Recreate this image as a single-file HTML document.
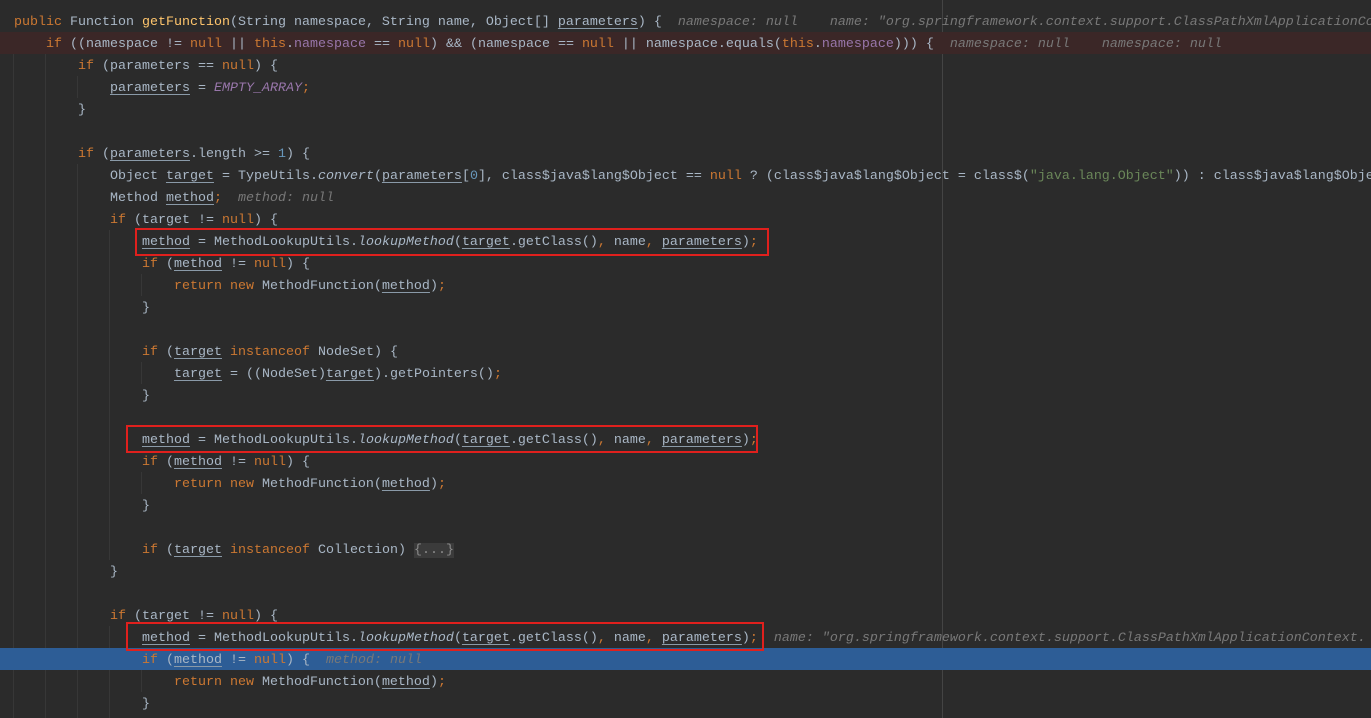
<!DOCTYPE html>
<html><head><meta charset="utf-8"><style>
body{margin:0;width:1371px;height:718px;background:#2b2b2b;overflow:hidden;position:relative}
pre{margin:0;position:absolute;left:14px;top:12px;font-family:"Liberation Mono",monospace;font-size:13.33px;line-height:22px;color:#a9b7c6;white-space:pre;z-index:2}
.k{color:#cc7832}.f{color:#ffc66d}.v{color:#9876aa}.i{font-style:italic}.s{color:#6a8759}
.u{text-decoration:underline;text-decoration-color:#8a9aa8;text-underline-offset:3px}
.h{color:#787878;font-style:italic}
.fold{background:#3b3b3b;color:#8c8c8c}
.band{position:absolute;left:0;width:1371px;height:22px}
.g{position:absolute;width:1px;background:#373737}
.box{position:absolute;border:2px solid #e0201d;z-index:3}
</style></head><body>
<div class="g" style="left:942px;top:0;height:718px;background:#444"></div>
<div class="g" style="left:13px;top:32px;height:686px"></div>
<div class="g" style="left:45px;top:54px;height:664px"></div>
<div class="g" style="left:77px;top:76px;height:22px"></div>
<div class="g" style="left:77px;top:164px;height:554px"></div>
<div class="g" style="left:109px;top:230px;height:330px"></div>
<div class="g" style="left:109px;top:626px;height:92px"></div>
<div class="g" style="left:141px;top:274px;height:22px"></div>
<div class="g" style="left:141px;top:362px;height:22px"></div>
<div class="g" style="left:141px;top:472px;height:22px"></div>
<div class="g" style="left:141px;top:670px;height:22px"></div>
<div class="band" style="top:32px;background:#3b2727"></div>
<div class="band" style="top:648px;background:#2d5d96"></div>
<div class="box" style="left:135px;top:228px;width:630px;height:24px"></div>
<div class="box" style="left:126px;top:425px;width:628px;height:24px"></div>
<div class="box" style="left:126px;top:622px;width:634px;height:25px"></div>
<pre><span class="k">public</span> Function <span class="f">getFunction</span>(String namespace, String name, Object[] <span class="u">parameters</span>) {  <span class="h">namespace: null    name: "org.springframework.context.support.ClassPathXmlApplicationContext@</span>
    <span class="k">if</span> ((namespace != <span class="k">null</span> || <span class="k">this</span>.<span class="v">namespace</span> == <span class="k">null</span>) &amp;&amp; (namespace == <span class="k">null</span> || namespace.equals(<span class="k">this</span>.<span class="v">namespace</span>))) {  <span class="h">namespace: null    namespace: null</span>
        <span class="k">if</span> (parameters == <span class="k">null</span>) {
            <span class="u">parameters</span> = <span class="v i">EMPTY_ARRAY</span><span class="k">;</span>
        }

        <span class="k">if</span> (<span class="u">parameters</span>.length &gt;= <span style="color:#6897bb">1</span>) {
            Object <span class="u">target</span> = TypeUtils.<span class="i">convert</span>(<span class="u">parameters</span>[<span style="color:#6897bb">0</span>], class$java$lang$Object == <span class="k">null</span> ? (class$java$lang$Object = class$(<span class="s">"java.lang.Object"</span>)) : class$java$lang$Object
            Method <span class="u">method</span><span class="k">;</span>  <span class="h">method: null</span>
            <span class="k">if</span> (target != <span class="k">null</span>) {
                <span class="u">method</span> = MethodLookupUtils.<span class="i">lookupMethod</span>(<span class="u">target</span>.getClass()<span class="k">,</span> name<span class="k">,</span> <span class="u">parameters</span>)<span class="k">;</span>
                <span class="k">if</span> (<span class="u">method</span> != <span class="k">null</span>) {
                    <span class="k">return new</span> MethodFunction(<span class="u">method</span>)<span class="k">;</span>
                }

                <span class="k">if</span> (<span class="u">target</span> <span class="k">instanceof</span> NodeSet) {
                    <span class="u">target</span> = ((NodeSet)<span class="u">target</span>).getPointers()<span class="k">;</span>
                }

                <span class="u">method</span> = MethodLookupUtils.<span class="i">lookupMethod</span>(<span class="u">target</span>.getClass()<span class="k">,</span> name<span class="k">,</span> <span class="u">parameters</span>)<span class="k">;</span>
                <span class="k">if</span> (<span class="u">method</span> != <span class="k">null</span>) {
                    <span class="k">return new</span> MethodFunction(<span class="u">method</span>)<span class="k">;</span>
                }

                <span class="k">if</span> (<span class="u">target</span> <span class="k">instanceof</span> Collection) <span class="fold">{...}</span>
            }

            <span class="k">if</span> (target != <span class="k">null</span>) {
                <span class="u">method</span> = MethodLookupUtils.<span class="i">lookupMethod</span>(<span class="u">target</span>.getClass()<span class="k">,</span> name<span class="k">,</span> <span class="u">parameters</span>)<span class="k">;</span>  <span class="h">name: "org.springframework.context.support.ClassPathXmlApplicationContext.</span>
                <span class="k">if</span> (<span class="u">method</span> != <span class="k">null</span>) {  <span class="h">method: null</span>
                    <span class="k">return new</span> MethodFunction(<span class="u">method</span>)<span class="k">;</span>
                }
</pre>
</body></html>
